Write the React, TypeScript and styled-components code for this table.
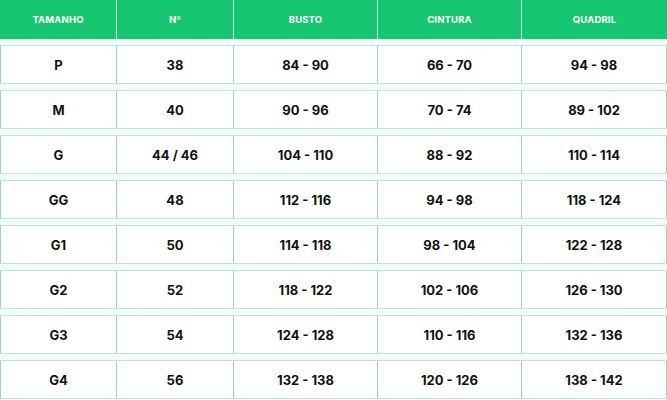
import React from "react";
import styled, { createGlobalStyle } from "styled-components";

const Global = createGlobalStyle`
  html, body { margin: 0; padding: 0; background: #ffffff; }
  body { font-family: "Inter", "Liberation Sans", sans-serif; }
`;

const cols = "117px 117px 144px 144px 145px";

const Table = styled.div`
  width: 667px;
  display: flex;
  flex-direction: column;
  gap: 6px;
  background: #f3fbf8;
`;

const HeaderRow = styled.div`
  display: grid;
  grid-template-columns: ${cols};
  height: 39px;
  background: #17c670;
`;

const HeaderCell = styled.div<{ $last?: boolean }>`
  display: flex;
  align-items: center;
  justify-content: center;
  padding-bottom: 1px;
  color: #ffffff;
  font-size: 9.5px;
  font-weight: 700;
  letter-spacing: 0.15px;
  border-right: ${(p) => (p.$last ? "none" : "1px solid #d9f6e8")};
`;

const Row = styled.div`
  display: grid;
  grid-template-columns: ${cols};
  height: 39px;
  box-sizing: border-box;
  background: #ffffff;
  border-top: 1px solid #b6ead5;
  border-bottom: 1px solid #b6ead5;
`;

const Cell = styled.div<{ $first?: boolean }>`
  display: flex;
  align-items: center;
  justify-content: center;
  color: #111111;
  font-size: 13px;
  font-weight: 700;
  box-sizing: border-box;
  border-right: 1.5px solid #93dcc0;
  border-left: ${(p) => (p.$first ? "1.5px solid #93dcc0" : "none")};
`;

const headers = ["TAMANHO", "Nº", "BUSTO", "CINTURA", "QUADRIL"];

const rows = [
  ["P", "38", "84 - 90", "66 - 70", "94 - 98"],
  ["M", "40", "90 - 96", "70 - 74", "89 - 102"],
  ["G", "44 / 46", "104 - 110", "88 - 92", "110 - 114"],
  ["GG", "48", "112 - 116", "94 - 98", "118 - 124"],
  ["G1", "50", "114 - 118", "98 - 104", "122 - 128"],
  ["G2", "52", "118 - 122", "102 - 106", "126 - 130"],
  ["G3", "54", "124 - 128", "110 - 116", "132 - 136"],
  ["G4", "56", "132 - 138", "120 - 126", "138 - 142"],
];

export default function App() {
  return (
    <>
      <Global />
      <Table>
        <HeaderRow>
          {headers.map((h, i) => (
            <HeaderCell key={h} $last={i === headers.length - 1}>
              {h}
            </HeaderCell>
          ))}
        </HeaderRow>
        {rows.map((r) => (
          <Row key={r[0]}>
            {r.map((c, i) => (
              <Cell key={i} $first={i === 0}>
                {c}
              </Cell>
            ))}
          </Row>
        ))}
      </Table>
    </>
  );
}
